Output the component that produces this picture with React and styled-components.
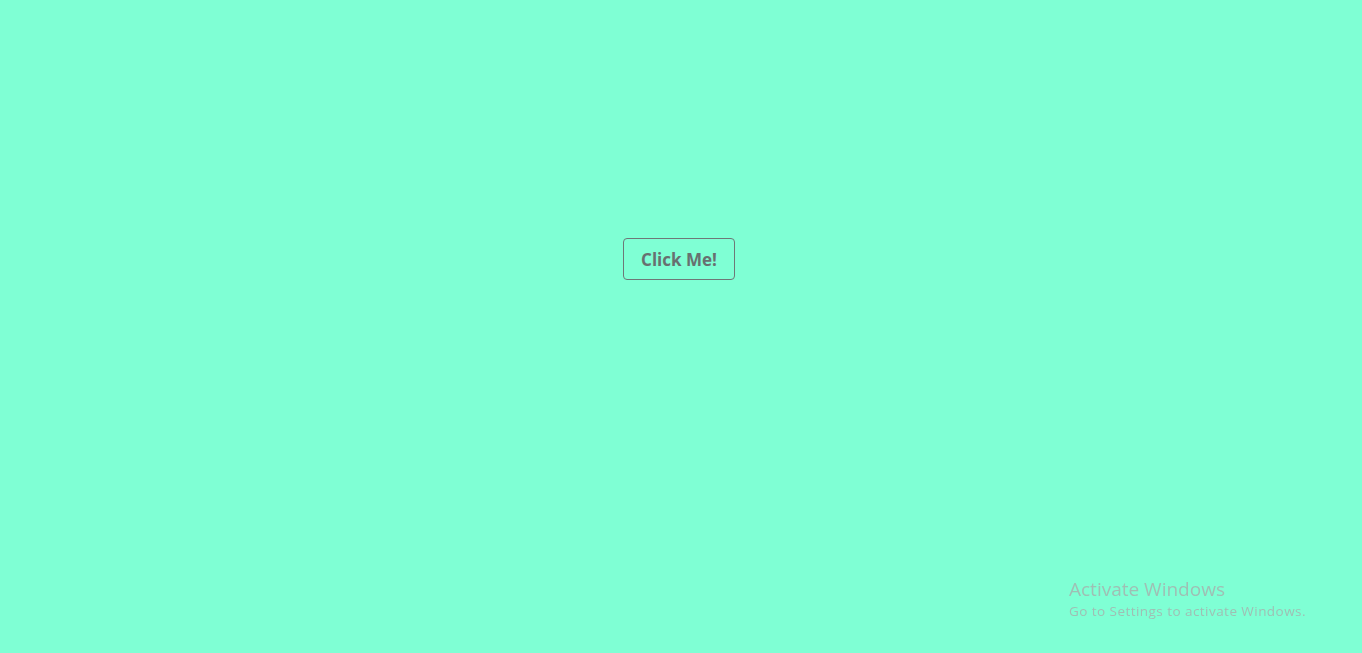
import styled, { createGlobalStyle } from 'styled-components';

const GlobalStyle = createGlobalStyle`
  html, body {
    margin: 0;
    padding: 0;
    background-color: #7fffd4;
    font-family: "Open Sans", "Noto Sans", sans-serif;
  }
`;

const Page = styled.div`
  min-height: 653px;
  display: flex;
  justify-content: center;
  align-items: flex-start;
  padding-top: 238px;
  padding-right: 4px;
  box-sizing: border-box;
`;

const Button = styled.button`
  width: 112px;
  height: 42px;
  border: 1px solid #6e7777;
  border-radius: 4px;
  background: transparent;
  color: #687070;
  font-family: "Open Sans", "Noto Sans", sans-serif;
  font-weight: 700;
  font-size: 17px;
  cursor: pointer;
  padding: 0;
`;

const Watermark = styled.div`
  position: fixed;
  left: 1069px;
  top: 576px;
  color: #9fbfb4;
  font-family: "Open Sans", "Noto Sans", sans-serif;
  pointer-events: none;
`;

const WatermarkTitle = styled.div`
  font-size: 19px;
  line-height: 26px;
`;

const WatermarkSub = styled.div`
  font-size: 13.5px;
  letter-spacing: 0.45px;
  line-height: 18px;
`;

function App() {
  return (
    <>
      <GlobalStyle />
      <Page>
        <Button>Click Me!</Button>
      </Page>
      <Watermark>
        <WatermarkTitle>Activate Windows</WatermarkTitle>
        <WatermarkSub>Go to Settings to activate Windows.</WatermarkSub>
      </Watermark>
    </>
  );
}

export default App;
